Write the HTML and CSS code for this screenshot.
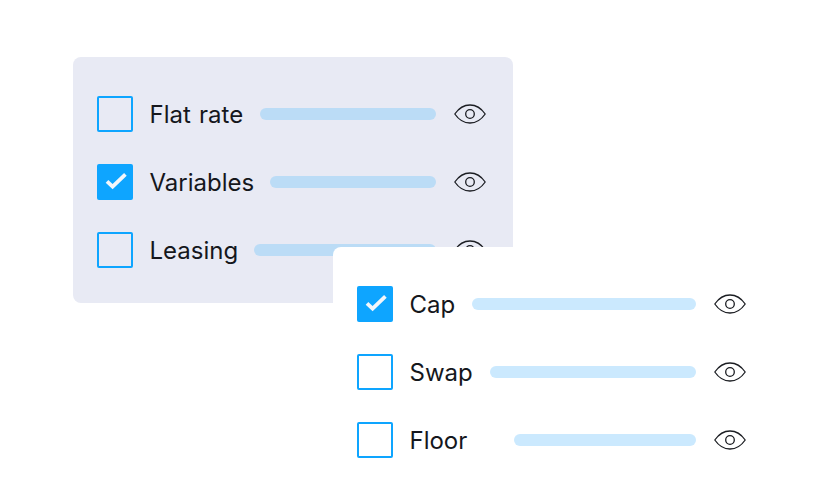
FILE: index.html
```html
<!DOCTYPE html>
<html lang="en">
<head>
<meta charset="utf-8">
<title>Options</title>
<link rel="stylesheet" href="styles.css">
</head>
<body>
<svg class="defs" width="0" height="0" aria-hidden="true">
  <symbol id="eye" viewBox="0 0 32 24">
    <path d="M0.800 12C4.800 6.200 10 3 16 3s11.200 3.200 15.200 9c-4 5.800-9.200 9-15.200 9S4.800 17.800 0.800 12Z" fill="none" stroke="#1b1d22" stroke-width="1.300" stroke-linejoin="round"/>
    <circle cx="16" cy="12" r="4.300" fill="none" stroke="#1b1d22" stroke-width="1.300"/>
  </symbol>
  <symbol id="check" viewBox="0 0 36 36">
    <path d="M10 17.400l5.600 5.200L28.400 10.400" fill="none" stroke="#f4f6fa" stroke-width="3.800"/>
  </symbol>
</svg>
<main class="canvas">
  <section class="panel">
    <div class="row">
      <span class="box"></span><span class="label">Flat rate</span><span class="bar bar-blue" style="width:176px"></span>
      <svg class="eye"><use href="#eye"/></svg>
    </div>
    <div class="row">
      <span class="box box-on"><svg class="check"><use href="#check"/></svg></span><span class="label">Variables</span><span class="bar bar-blue" style="width:166px"></span>
      <svg class="eye"><use href="#eye"/></svg>
    </div>
    <div class="row">
      <span class="box"></span><span class="label">Leasing</span><span class="bar bar-blue" style="width:182px"></span>
      <svg class="eye"><use href="#eye"/></svg>
    </div>
  </section>
  <section class="card">
    <div class="row">
      <span class="box box-on"><svg class="check"><use href="#check"/></svg></span><span class="label">Cap</span><span class="bar bar-light" style="width:224px"></span>
      <svg class="eye"><use href="#eye"/></svg>
    </div>
    <div class="row">
      <span class="box"></span><span class="label">Swap</span><span class="bar bar-light" style="width:206px"></span>
      <svg class="eye"><use href="#eye"/></svg>
    </div>
    <div class="row">
      <span class="box"></span><span class="label">Floor</span><span class="bar bar-light" style="width:182px"></span>
      <svg class="eye"><use href="#eye"/></svg>
    </div>
  </section>
</main>
</body>
</html>
```
FILE: styles.css
```css
* {
  box-sizing: border-box;
}

html,
body {
  margin: 0;
  height: 100%;
  overflow: hidden;
  background: #ffffff;
}

.defs {
  position: absolute;
}

.canvas {
  position: relative;
  width: 825px;
  height: 480px;
  padding: 57px 0 0 73px;
  font-family: Inter, "Liberation Sans", sans-serif;
  font-size: 24px;
  color: #15171c;
}

.panel {
  width: 440px;
  height: 246px;
  padding: 39px 27px 0 24px;
  border-radius: 8px;
  background: #e8eaf4;
  display: flex;
  flex-direction: column;
  gap: 32px;
}

.card {
  position: absolute;
  left: 333px;
  top: 247px;
  width: 440px;
  height: 233px;
  padding: 39px 27px 0 24px;
  border-radius: 8px;
  background: #ffffff;
  display: flex;
  flex-direction: column;
  gap: 32px;
}

.row {
  display: flex;
  align-items: center;
  height: 36px;
}

.box {
  flex: none;
  width: 36px;
  height: 36px;
  border: 2px solid #0ea5ff;
  border-radius: 2px;
}

.box-on {
  border: 0;
  background: #0ea5ff;
}

.check {
  display: block;
  width: 36px;
  height: 36px;
}

.label {
  margin-left: 16.5px;
  padding-top: 2px;
  line-height: 36px;
  white-space: nowrap;
  word-spacing: 1.5px;
}

.bar {
  flex: none;
  height: 12px;
  margin: 0 18px 0 auto;
  border-radius: 6px;
}

.bar-blue {
  background: #bbdcf6;
}

.bar-light {
  background: #cbe9fe;
}

.eye {
  flex: none;
  width: 32px;
  height: 24px;
}
```
